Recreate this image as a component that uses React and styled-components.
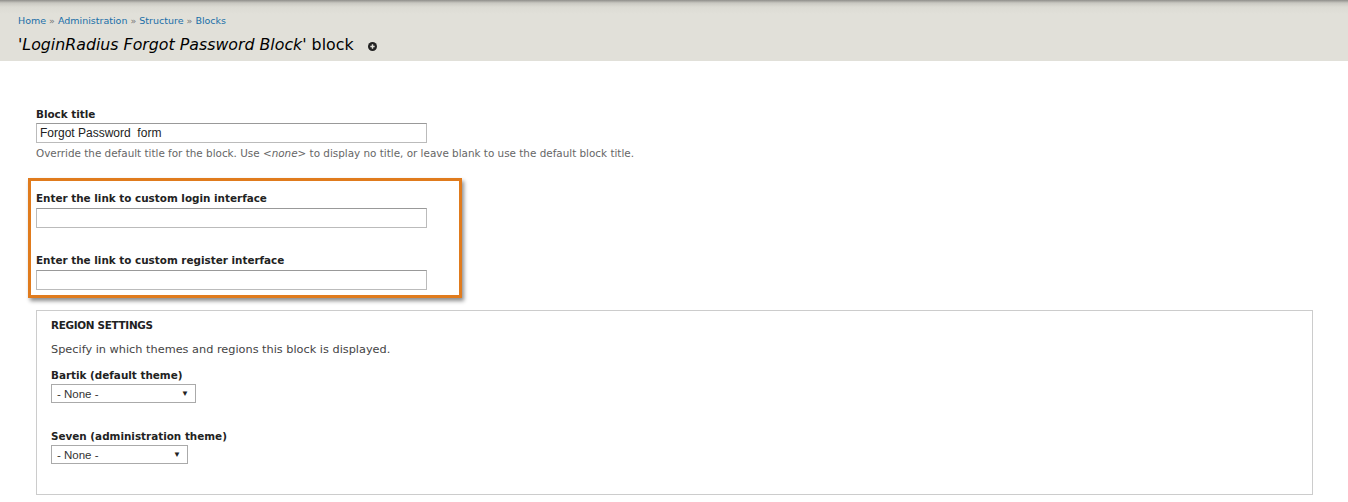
import React from "react";
import styled, { createGlobalStyle } from "styled-components";

const GlobalStyle = createGlobalStyle`
  html, body {
    margin: 0;
    padding: 0;
    background: #ffffff;
    font-family: "DejaVu Sans", Verdana, sans-serif;
    color: #333;
  }
`;

const Page = styled.div`
  width: 1348px;
  height: 502px;
  overflow: hidden;
  background: #fff;
`;

const Header = styled.header`
  height: 61px;
  box-sizing: border-box;
  padding: 14px 18px 0;
  background: linear-gradient(to bottom, #8f8e8a 0px, #c9c8c2 3px, #dcdbd4 7px, #e1e0d9 14px, #e1e0d9 100%);
`;

const Breadcrumb = styled.nav`
  font-size: 9.5px;
  line-height: 14px;
  color: #777;
  a {
    color: #1a6fa8;
    text-decoration: none;
  }
`;

const Title = styled.h1`
  margin: 6px 0 0;
  font-size: 15.8px;
  font-weight: normal;
  color: #000;
  line-height: 22px;
  display: flex;
  align-items: center;
  em {
    font-style: oblique;
  }
`;

const PlusIcon = styled.span`
  display: inline-flex;
  margin-left: 14px;
  margin-top: 3px;
`;

const Main = styled.main`
  padding: 47px 0 0 36px;
`;

const Field = styled.div`
  margin-bottom: ${(p) => p.$gap || 0}px;
`;

const Label = styled.label`
  display: block;
  font-size: 10.4px;
  font-weight: bold;
  color: #222;
  line-height: 13px;
  margin-bottom: ${(p) => p.$space || 2}px;
`;

const TextInput = styled.input`
  display: block;
  box-sizing: border-box;
  width: 391px;
  height: 20px;
  border: 1px solid #bbb;
  border-top-color: #999;
  padding: 0 3px;
  font-family: "Liberation Sans", Arial, sans-serif;
  font-size: 12px;
  color: #222;
  outline: none;
`;

const Description = styled.div`
  font-size: 10.4px;
  color: #666;
  margin-top: 4px;
  line-height: 13px;
  em {
    font-style: oblique;
  }
`;

const Highlight = styled.div`
  width: 434px;
  box-sizing: border-box;
  margin: 18px 0 0 -8px;
  padding: 11px 0 5px 5px;
  border: 3px solid #e07b1d;
  box-shadow: 2px 3px 4px rgba(0, 0, 0, 0.45);
`;

const Fieldset = styled.fieldset`
  width: 1277px;
  box-sizing: border-box;
  margin: 12px 0 0 0;
  padding: 8px 14px 30px;
  border: 1px solid #ccc;
  height: 185px;
`;

const Legend = styled.div`
  font-size: 10.4px;
  font-weight: bold;
  color: #222;
  letter-spacing: -0.3px;
  margin-bottom: 12px;
`;

const FieldsetDesc = styled.div`
  font-size: 11.3px;
  color: #444;
  margin-bottom: 13px;
`;

const SelectBox = styled.div`
  box-sizing: border-box;
  width: ${(p) => p.$width}px;
  height: 19px;
  border: 1px solid #aaa;
  display: flex;
  align-items: center;
  justify-content: space-between;
  padding: 0 6px 0 5px;
  font-family: "Liberation Sans", Arial, sans-serif;
  font-size: 11.5px;
  color: #333;
  background: #fff;
`;

const Arrow = styled.span`
  font-size: 8px;
  color: #222;
`;

function Select({ width }) {
  return (
    <SelectBox $width={width}>
      <span>- None -</span>
      <Arrow>▼</Arrow>
    </SelectBox>
  );
}

export default function App() {
  return (
    <Page>
      <GlobalStyle />
      <Header>
        <Breadcrumb>
          <a href="#">Home</a> » <a href="#">Administration</a> »{" "}
          <a href="#">Structure</a> » <a href="#">Blocks</a>
        </Breadcrumb>
        <Title>
          <span>
            '<em>LoginRadius Forgot Password Block</em>' block
          </span>
          <PlusIcon>
            <svg width="9" height="9" viewBox="0 0 10 10">
              <circle cx="5" cy="5" r="5" fill="#222" />
              <path d="M5 2.6v4.8M2.6 5h4.8" stroke="#e1e0d9" strokeWidth="1.6" />
            </svg>
          </PlusIcon>
        </Title>
      </Header>
      <Main>
        <Field>
          <Label>Block title</Label>
          <TextInput defaultValue="Forgot Password  form" />
          <Description>
            Override the default title for the block. Use <em>&lt;none&gt;</em> to display no title, or leave blank to use the default block title.
          </Description>
        </Field>
        <Highlight>
          <Field $gap={26}>
            <Label $space={3}>Enter the link to custom login interface</Label>
            <TextInput />
          </Field>
          <Field>
            <Label $space={3}>Enter the link to custom register interface</Label>
            <TextInput />
          </Field>
        </Highlight>
        <Fieldset>
          <Legend>REGION SETTINGS</Legend>
          <FieldsetDesc>Specify in which themes and regions this block is displayed.</FieldsetDesc>
          <Field $gap={27}>
            <Label>Bartik (default theme)</Label>
            <Select width={145} />
          </Field>
          <Field>
            <Label>Seven (administration theme)</Label>
            <Select width={137} />
          </Field>
        </Fieldset>
      </Main>
    </Page>
  );
}
